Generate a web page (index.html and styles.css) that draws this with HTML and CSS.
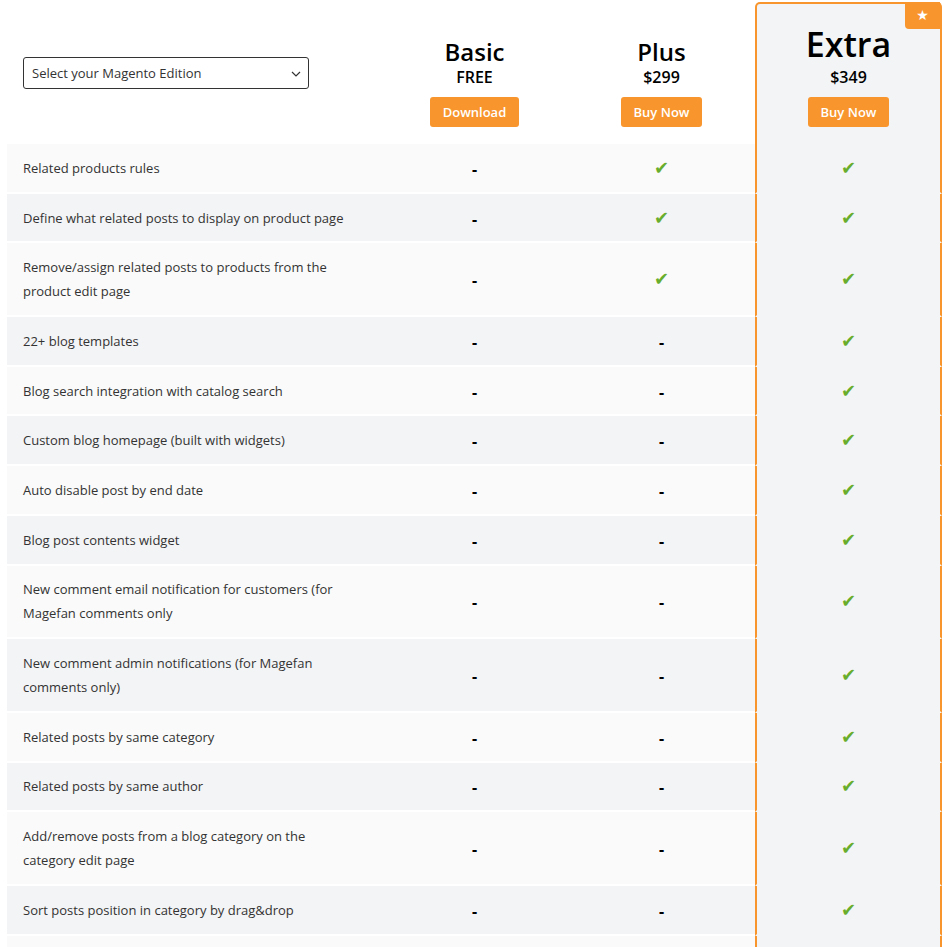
FILE: index.html
```html
<!DOCTYPE html>
<html lang="en">
<head>
<meta charset="utf-8">
<title>Magento Blog Editions</title>
<link rel="stylesheet" href="styles.css">
</head>
<body>
<div class="page">
  <table class="compare">
    <colgroup>
      <col class="col-feature">
      <col class="col-plan">
      <col class="col-plan">
      <col class="col-plan">
    </colgroup>
    <thead>
      <tr>
        <th class="head-select">
          <div class="select-wrap">
            <select class="edition-select">
              <option>Select your Magento Edition</option>
              <option>Magento Open Source</option>
              <option>Adobe Commerce</option>
            </select>
            <svg class="chevron" width="10" height="6" viewBox="0 0 10 6"><path d="M1 1l4 4 4-4" fill="none" stroke="#333" stroke-width="1.2"/></svg>
          </div>
        </th>
        <th class="head-plan">
          <div class="plan">
            <div class="plan-name">Basic</div>
            <div class="plan-price">FREE</div>
            <a class="btn" href="#">Download</a>
          </div>
        </th>
        <th class="head-plan">
          <div class="plan">
            <div class="plan-name">Plus</div>
            <div class="plan-price">$299</div>
            <a class="btn" href="#">Buy Now</a>
          </div>
        </th>
        <th class="head-plan extra extra-head">
          <div class="plan">
            <span class="star">★</span>
            <div class="plan-name big">Extra</div>
            <div class="plan-price">$349</div>
            <a class="btn" href="#">Buy Now</a>
          </div>
        </th>
      </tr>
    </thead>
    <tbody>
      <tr><td class="feat">Related products rules</td><td class="val"><span class="no">-</span></td><td class="val"><span class="yes">✔</span></td><td class="val extra"><span class="yes">✔</span></td></tr>
      <tr><td class="feat">Define what related posts to display on product page</td><td class="val"><span class="no">-</span></td><td class="val"><span class="yes">✔</span></td><td class="val extra"><span class="yes">✔</span></td></tr>
      <tr><td class="feat">Remove/assign related posts to products from the product edit page</td><td class="val"><span class="no">-</span></td><td class="val"><span class="yes">✔</span></td><td class="val extra"><span class="yes">✔</span></td></tr>
      <tr><td class="feat">22+ blog templates</td><td class="val"><span class="no">-</span></td><td class="val"><span class="no">-</span></td><td class="val extra"><span class="yes">✔</span></td></tr>
      <tr><td class="feat">Blog search integration with catalog search</td><td class="val"><span class="no">-</span></td><td class="val"><span class="no">-</span></td><td class="val extra"><span class="yes">✔</span></td></tr>
      <tr><td class="feat">Custom blog homepage (built with widgets)</td><td class="val"><span class="no">-</span></td><td class="val"><span class="no">-</span></td><td class="val extra"><span class="yes">✔</span></td></tr>
      <tr><td class="feat">Auto disable post by end date</td><td class="val"><span class="no">-</span></td><td class="val"><span class="no">-</span></td><td class="val extra"><span class="yes">✔</span></td></tr>
      <tr><td class="feat">Blog post contents widget</td><td class="val"><span class="no">-</span></td><td class="val"><span class="no">-</span></td><td class="val extra"><span class="yes">✔</span></td></tr>
      <tr><td class="feat">New comment email notification for customers (for Magefan comments only</td><td class="val"><span class="no">-</span></td><td class="val"><span class="no">-</span></td><td class="val extra"><span class="yes">✔</span></td></tr>
      <tr><td class="feat">New comment admin notifications (for Magefan comments only)</td><td class="val"><span class="no">-</span></td><td class="val"><span class="no">-</span></td><td class="val extra"><span class="yes">✔</span></td></tr>
      <tr><td class="feat">Related posts by same category</td><td class="val"><span class="no">-</span></td><td class="val"><span class="no">-</span></td><td class="val extra"><span class="yes">✔</span></td></tr>
      <tr><td class="feat">Related posts by same author</td><td class="val"><span class="no">-</span></td><td class="val"><span class="no">-</span></td><td class="val extra"><span class="yes">✔</span></td></tr>
      <tr><td class="feat">Add/remove posts from a blog category on the category edit page</td><td class="val"><span class="no">-</span></td><td class="val"><span class="no">-</span></td><td class="val extra"><span class="yes">✔</span></td></tr>
      <tr><td class="feat">Sort posts position in category by drag&amp;drop</td><td class="val"><span class="no">-</span></td><td class="val"><span class="no">-</span></td><td class="val extra"><span class="yes">✔</span></td></tr>
      <tr><td class="feat">Blog post views statistic</td><td class="val"><span class="no">-</span></td><td class="val"><span class="no">-</span></td><td class="val extra"><span class="yes">✔</span></td></tr>
    </tbody>
  </table>
</div>
</body>
</html>
```
FILE: styles.css
```css
* { box-sizing: border-box; }

html, body {
  margin: 0;
  padding: 0;
  background: #fff;
}

body {
  font-family: "Open Sans", "Noto Sans", sans-serif;
  color: #333;
  font-size: 13px;
}

.page {
  padding: 2px 0 0 7px;
}

.compare {
  width: 935px;
  table-layout: fixed;
  border-collapse: separate;
  border-spacing: 0;
}

.col-feature { width: 374px; }
.col-plan { width: 187px; }

th, td {
  padding: 0;
  font-weight: normal;
}

/* header */
.head-select {
  height: 142px;
  vertical-align: middle;
  text-align: left;
  padding: 0 0 0 16px;
  background: #fff;
}

.select-wrap {
  position: relative;
  width: 286px;
  height: 32px;
}

.edition-select {
  appearance: none;
  -webkit-appearance: none;
  width: 100%;
  height: 32px;
  border: 1px solid #333;
  border-radius: 3px;
  background: #fff;
  font-family: "Open Sans", "Noto Sans", sans-serif;
  font-size: 13px;
  color: #333;
  padding: 0 30px 1px 8px;
  margin: 0;
}

.chevron {
  position: absolute;
  right: 8px;
  top: 14px;
  pointer-events: none;
}

.head-plan {
  height: 142px;
  vertical-align: bottom;
  background: #fff;
}

.plan {
  position: relative;
  height: 142px;
  display: flex;
  flex-direction: column;
  align-items: center;
  justify-content: flex-end;
  padding-bottom: 17px;
  color: #000;
}

.plan-name {
  font-size: 24px;
  font-weight: 600;
  line-height: 28px;
  margin-bottom: 1px;
}

.plan-name.big {
  font-size: 34px;
  line-height: 40px;
  margin-bottom: 3px;
}

.plan-price {
  font-size: 16px;
  font-weight: 600;
  line-height: 20px;
  margin-bottom: 10px;
}

.btn {
  display: block;
  height: 30px;
  line-height: 30px;
  padding: 0 13px;
  background: #f8952d;
  color: #fff;
  border-radius: 3px;
  font-size: 13px;
  font-weight: 600;
  text-decoration: none;
}

/* extra column */
.extra {
  background: #f3f4f6;
  border-left: 2px solid #f8952d;
  border-right: 2px solid #f8952d;
}

.extra-head {
  border-top: 2px solid #f8952d;
  border-radius: 5px 5px 0 0;
}

.extra-head .plan {
  height: 140px;
}

.star {
  position: absolute;
  top: -2px;
  right: 0;
  width: 35px;
  height: 27px;
  background: #f8952d;
  color: #fff;
  font-family: "DejaVu Sans", sans-serif;
  font-size: 14px;
  line-height: 27px;
  text-align: center;
  border-radius: 0 0 0 4px;
}

/* body rows */
.feat {
  padding: 11.85px 28px 11.85px 16px;
  line-height: 24px;
  color: #333;
}

.val {
  text-align: center;
  vertical-align: middle;
}

.feat, .val {
  border-bottom: 2px solid #fff;
}

tbody tr:nth-child(odd) .feat,
tbody tr:nth-child(odd) .val {
  background: #fafafa;
}

tbody tr:nth-child(even) .feat,
tbody tr:nth-child(even) .val {
  background: #f3f4f6;
}

tbody .val.extra,
tbody tr:nth-child(odd) .val.extra,
tbody tr:nth-child(even) .val.extra {
  background: #f3f4f6;
  border-bottom: 2px solid #f3f4f6;
}

.no {
  font-weight: 700;
  font-size: 16px;
  color: #000;
  display: inline-block;
  transform: translateY(1px);
}

.yes {
  font-family: "DejaVu Sans", sans-serif;
  font-size: 18px;
  line-height: 20px;
  color: #68ad2c;
  display: inline-block;
}
```
